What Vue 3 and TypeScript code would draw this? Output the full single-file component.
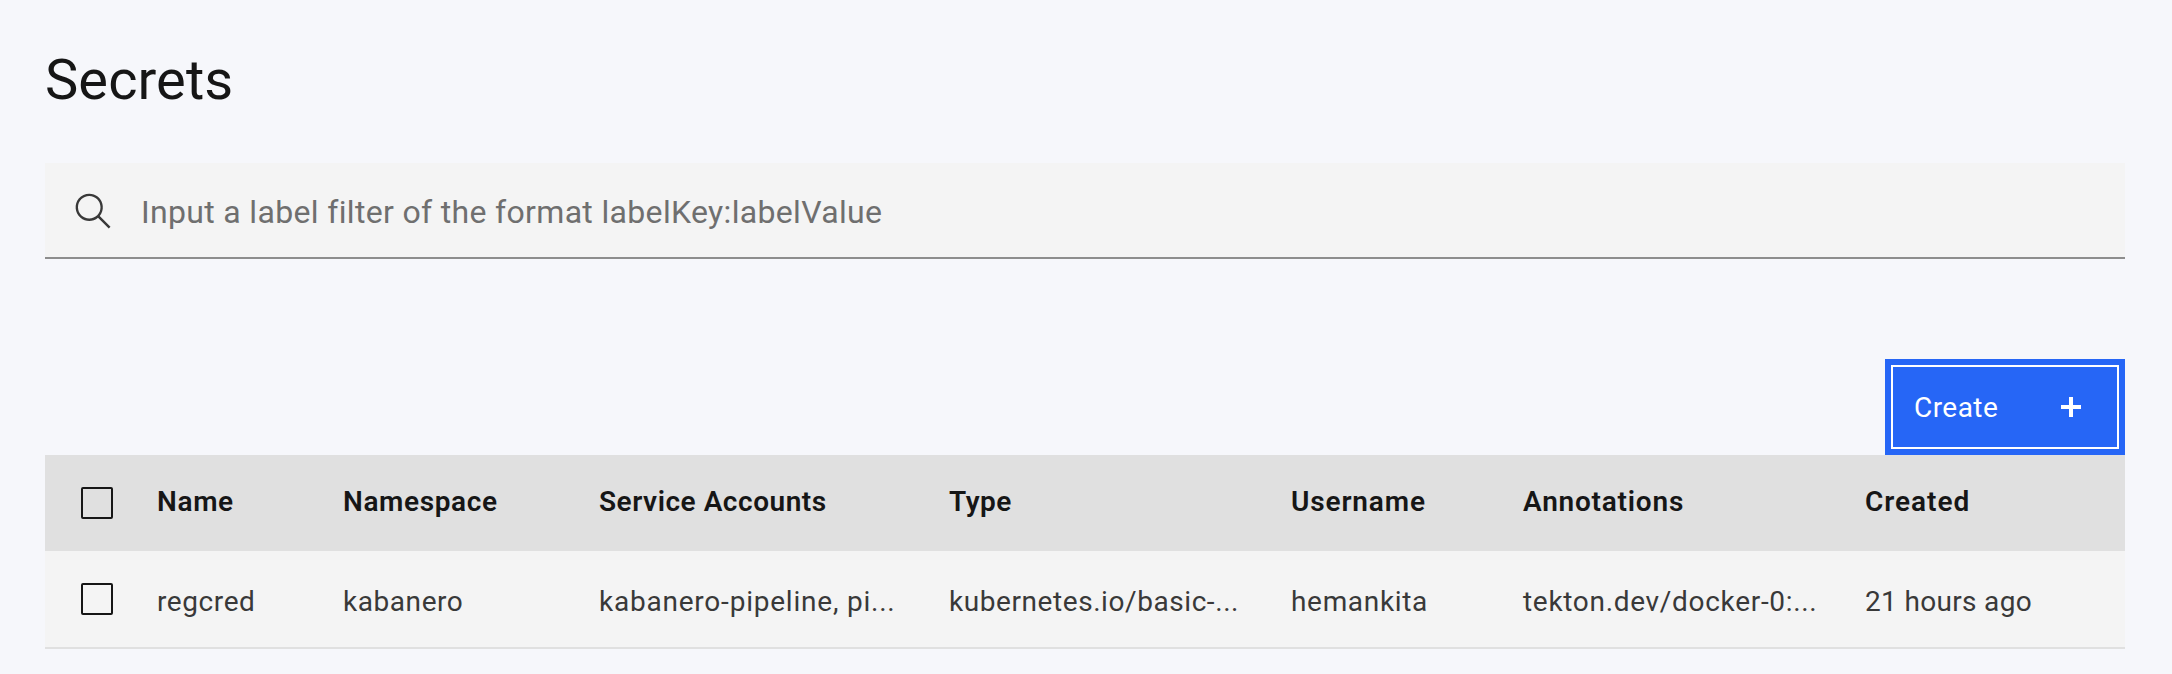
<script setup lang="ts">
import { ref } from 'vue'

interface Secret {
  name: string
  namespace: string
  serviceAccounts: string
  type: string
  username: string
  annotations: string
  created: string
}

const columns: { key: keyof Secret; label: string }[] = [
  { key: 'name', label: 'Name' },
  { key: 'namespace', label: 'Namespace' },
  { key: 'serviceAccounts', label: 'Service Accounts' },
  { key: 'type', label: 'Type' },
  { key: 'username', label: 'Username' },
  { key: 'annotations', label: 'Annotations' },
  { key: 'created', label: 'Created' },
]

const secrets: Secret[] = [
  {
    name: 'regcred',
    namespace: 'kabanero',
    serviceAccounts: 'kabanero-pipeline, pi...',
    type: 'kubernetes.io/basic-...',
    username: 'hemankita',
    annotations: 'tekton.dev/docker-0:...',
    created: '21 hours ago',
  },
]

const filter = ref('')
</script>

<template>
  <main class="page">
    <h1 class="title">Secrets</h1>

    <div class="search">
      <svg class="search-icon" viewBox="0 0 16 16" aria-hidden="true">
        <path
          d="M15,14.3L10.7,10c1.9-2.3,1.6-5.8-0.7-7.7S4.2,0.7,2.3,3S0.7,8.8,3,10.7c2,1.7,5,1.7,7,0l4.3,4.3L15,14.3z M2,6.5C2,4,4,2,6.5,2S11,4,11,6.5S9,11,6.5,11S2,9,2,6.5z"
        />
      </svg>
      <input
        v-model="filter"
        class="search-input"
        type="text"
        placeholder="Input a label filter of the format labelKey:labelValue"
      />
    </div>

    <div class="toolbar">
      <button class="create" type="button">
        <span class="create-label">Create</span>
        <svg class="plus" viewBox="0 0 20 20" aria-hidden="true">
          <path d="M8 0h4v8h8v4h-8v8H8v-8H0V8h8z" />
        </svg>
      </button>
    </div>

    <div class="table" role="table">
      <div class="row head" role="row">
        <span class="check" role="checkbox" aria-checked="false"></span>
        <span v-for="col in columns" :key="col.key" class="cell" :class="col.key" role="columnheader">{{ col.label }}</span>
      </div>
      <div v-for="secret in secrets" :key="secret.name" class="row body" role="row">
        <span class="check" role="checkbox" aria-checked="false"></span>
        <span v-for="col in columns" :key="col.key" class="cell" :class="col.key" role="cell">{{ secret[col.key] }}</span>
      </div>
    </div>
  </main>
</template>

<style>
body {
  background: #f6f7fb;
}
</style>

<style scoped>
.page {
  box-sizing: border-box;
  width: 2172px;
  height: 674px;
  padding: 45px 47px 0 45px;
  background: #f6f7fb;
  color: #161616;
  font-family: Roboto, "Liberation Sans", sans-serif;
}
.title {
  margin: 0;
  height: 118px;
  font-size: 56px;
  font-weight: 400;
  line-height: 70px;
  letter-spacing: 0.1px;
}
.search {
  box-sizing: border-box;
  display: flex;
  align-items: center;
  height: 96px;
  padding: 2px 28px 0;
  background: #f4f4f4;
  border-bottom: 2px solid #8d8d8d;
}
.search-icon {
  flex: none;
  width: 40px;
  height: 40px;
  fill: #393939;
}
.search-input {
  flex: 1;
  height: 60px;
  margin-left: 28px;
  padding: 1px 0 0;
  border: 0;
  outline: 0;
  background: transparent;
  color: #161616;
  font-family: inherit;
  font-size: 32px;
  letter-spacing: 0.33px;
}
.search-input::placeholder {
  color: #6f6f6f;
  opacity: 1;
}
.toolbar {
  display: flex;
  justify-content: flex-end;
  margin-top: 100px;
}
.create {
  box-sizing: border-box;
  display: flex;
  align-items: center;
  justify-content: space-between;
  width: 240px;
  height: 96px;
  padding: 0 38px 0 23px;
  border: 6px solid #2666f6;
  border-radius: 0;
  outline: 2px solid #fff;
  outline-offset: -8px;
  background: #2666f6;
  color: #fff;
  font-family: inherit;
  font-size: 28px;
  font-weight: 400;
  line-height: 36px;
  letter-spacing: 0.46px;
}
.create-label {
  padding-top: 2px;
}
.plus {
  width: 20px;
  height: 20px;
  fill: #fff;
}
.row {
  box-sizing: border-box;
  display: grid;
  grid-template-columns: 76px 186px 256px 350px 342px 232px 342px 1fr;
  padding-left: 36px;
  font-size: 28px;
  line-height: 36px;
}
.head {
  height: 96px;
  padding-top: 29px;
  background: #e0e0e0;
  font-weight: 600;
}
.body {
  height: 98px;
  padding-top: 32px;
  background: #f4f4f4;
  border-bottom: 2px solid #e0e0e0;
  color: #393939;
}
.check {
  box-sizing: border-box;
  width: 32px;
  height: 32px;
  margin-top: 3px;
  border: 2px solid #161616;
  border-radius: 2px;
}
.body .check {
  margin-top: 0;
}
.cell {
  white-space: nowrap;
}
.body .cell {
  padding-top: 1px;
}
.head .name { letter-spacing: 0.64px; }
.head .namespace { letter-spacing: 0.61px; }
.head .serviceAccounts { letter-spacing: 0.53px; }
.head .type { letter-spacing: 0.5px; }
.head .username { letter-spacing: 0.85px; }
.head .annotations { letter-spacing: 0.78px; }
.head .created { letter-spacing: 0.97px; }
.body .name { letter-spacing: 0.59px; }
.body .namespace { letter-spacing: 0.56px; }
.body .serviceAccounts { letter-spacing: 0.78px; }
.body .type { letter-spacing: 0.57px; }
.body .username { letter-spacing: 0.68px; }
.body .annotations { letter-spacing: 0.69px; }
.body .created { letter-spacing: 0.33px; }
</style>
